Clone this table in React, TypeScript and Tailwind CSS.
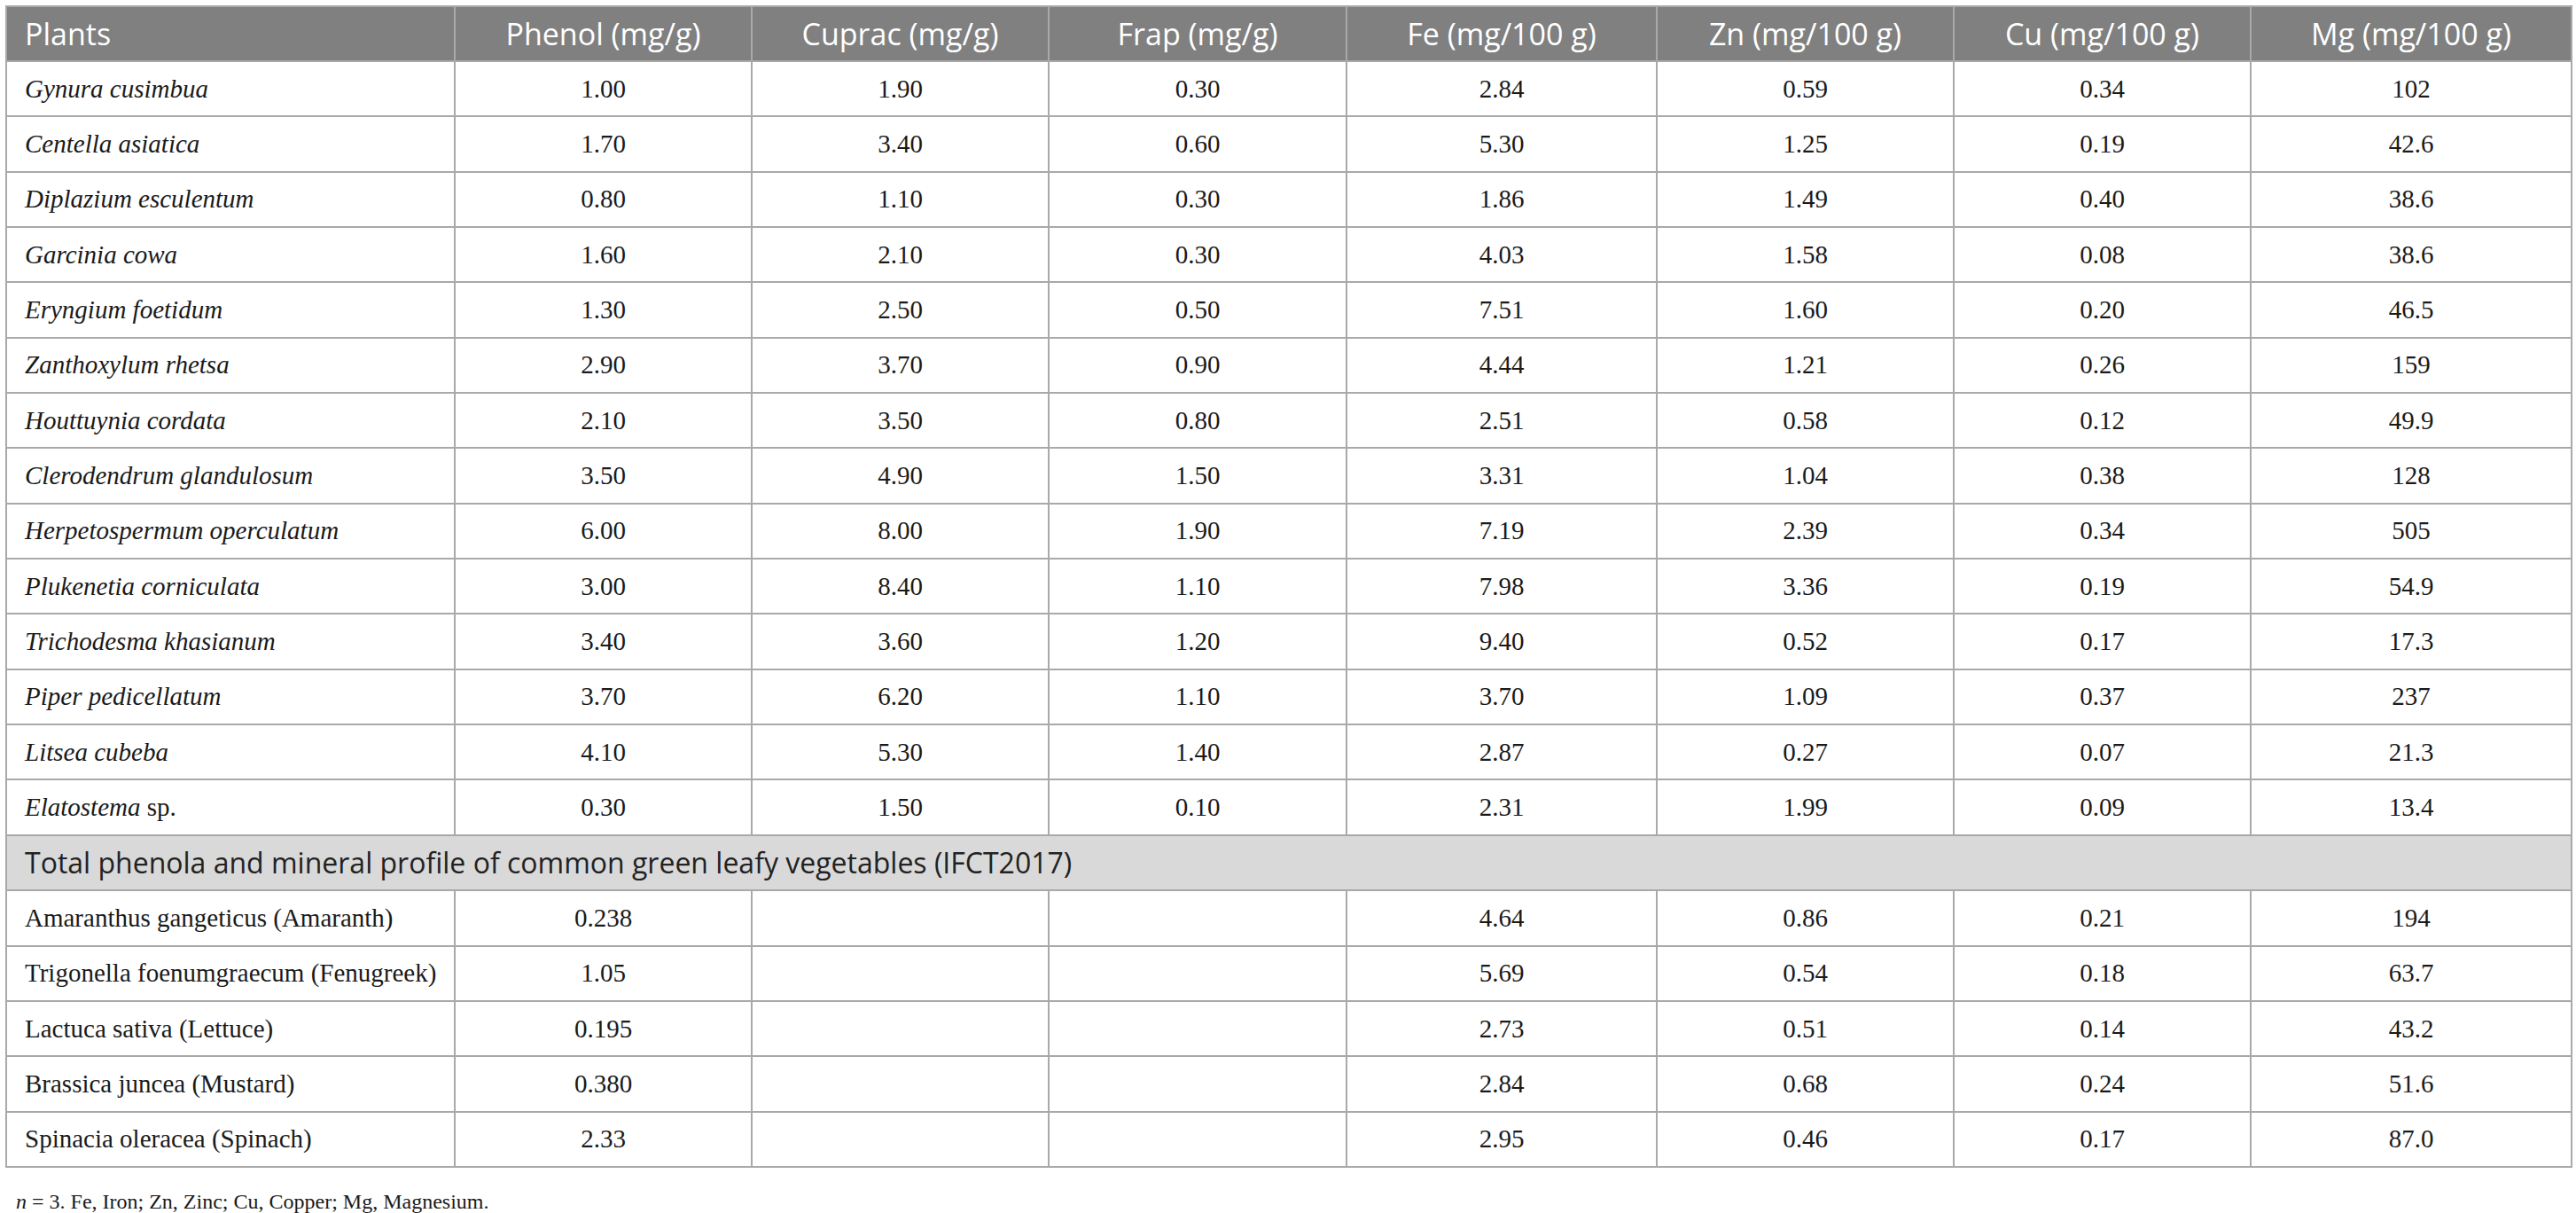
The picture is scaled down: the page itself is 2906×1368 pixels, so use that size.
const sans = "font-['Open_Sans','Noto_Sans',sans-serif]";
const serif = "font-['Liberation_Serif','Times_New_Roman',serif]";

const headers = [
  "Plants",
  "Phenol (mg/g)",
  "Cuprac (mg/g)",
  "Frap (mg/g)",
  "Fe (mg/100 g)",
  "Zn (mg/100 g)",
  "Cu (mg/100 g)",
  "Mg (mg/100 g)",
];

const wildPlants: [string, string[], string?][] = [
  ["Gynura cusimbua", ["1.00", "1.90", "0.30", "2.84", "0.59", "0.34", "102"]],
  ["Centella asiatica", ["1.70", "3.40", "0.60", "5.30", "1.25", "0.19", "42.6"]],
  ["Diplazium esculentum", ["0.80", "1.10", "0.30", "1.86", "1.49", "0.40", "38.6"]],
  ["Garcinia cowa", ["1.60", "2.10", "0.30", "4.03", "1.58", "0.08", "38.6"]],
  ["Eryngium foetidum", ["1.30", "2.50", "0.50", "7.51", "1.60", "0.20", "46.5"]],
  ["Zanthoxylum rhetsa", ["2.90", "3.70", "0.90", "4.44", "1.21", "0.26", "159"]],
  ["Houttuynia cordata", ["2.10", "3.50", "0.80", "2.51", "0.58", "0.12", "49.9"]],
  ["Clerodendrum glandulosum", ["3.50", "4.90", "1.50", "3.31", "1.04", "0.38", "128"]],
  ["Herpetospermum operculatum", ["6.00", "8.00", "1.90", "7.19", "2.39", "0.34", "505"]],
  ["Plukenetia corniculata", ["3.00", "8.40", "1.10", "7.98", "3.36", "0.19", "54.9"]],
  ["Trichodesma khasianum", ["3.40", "3.60", "1.20", "9.40", "0.52", "0.17", "17.3"]],
  ["Piper pedicellatum", ["3.70", "6.20", "1.10", "3.70", "1.09", "0.37", "237"]],
  ["Litsea cubeba", ["4.10", "5.30", "1.40", "2.87", "0.27", "0.07", "21.3"]],
  ["Elatostema", ["0.30", "1.50", "0.10", "2.31", "1.99", "0.09", "13.4"], " sp."],
];

const commonVeg: [string, string[]][] = [
  ["Amaranthus gangeticus (Amaranth)", ["0.238", "", "", "4.64", "0.86", "0.21", "194"]],
  ["Trigonella foenumgraecum (Fenugreek)", ["1.05", "", "", "5.69", "0.54", "0.18", "63.7"]],
  ["Lactuca sativa (Lettuce)", ["0.195", "", "", "2.73", "0.51", "0.14", "43.2"]],
  ["Brassica juncea (Mustard)", ["0.380", "", "", "2.84", "0.68", "0.24", "51.6"]],
  ["Spinacia oleracea (Spinach)", ["2.33", "", "", "2.95", "0.46", "0.17", "87.0"]],
];

const cell = "border-2 border-[#a9a9a9] px-[20px] py-0 whitespace-nowrap";

function ValueCells({ values }: { values: string[] }) {
  return (
    <>
      {values.map((v, i) => (
        <td key={i} className={`${cell} text-center`}>
          {v}
        </td>
      ))}
    </>
  );
}

export default function App() {
  return (
    <div className="bg-white min-h-[1368px] pt-[6px] pl-[6px] text-[#1a1a1a]">
      <table className="table-fixed border-collapse w-[2894px]">
        <colgroup>
          <col className="w-[506px]" />
          <col className="w-[335px]" />
          <col className="w-[335px]" />
          <col className="w-[336px]" />
          <col className="w-[350px]" />
          <col className="w-[335px]" />
          <col className="w-[335px]" />
          <col className="w-[362px]" />
        </colgroup>
        <thead>
          <tr className={`h-[62px] bg-[#808080] text-white ${sans} text-[34px]`}>
            {headers.map((h, i) => (
              <th
                key={h}
                className={`${cell} font-normal leading-none ${i === 0 ? "text-left" : "text-center"}`}
              >
                {h}
              </th>
            ))}
          </tr>
        </thead>
        <tbody className={`${serif} text-[29px] leading-none`}>
          {wildPlants.map(([name, values, suffix]) => (
            <tr key={name} className="h-[62.35px]">
              <td className={`${cell} text-left`}>
                <i>{name}</i>
                {suffix}
              </td>
              <ValueCells values={values} />
            </tr>
          ))}
          <tr className="h-[62.35px] bg-[#d9d9d9]">
            <td colSpan={8} className={`${cell} text-left ${sans} text-[32px] text-[#222]`}>
              Total phenola and mineral profile of common green leafy vegetables (IFCT2017)
            </td>
          </tr>
          {commonVeg.map(([name, values]) => (
            <tr key={name} className="h-[62.35px]">
              <td className={`${cell} text-left`}>{name}</td>
              <ValueCells values={values} />
            </tr>
          ))}
        </tbody>
      </table>
      <p className={`${serif} text-[24px] pl-[12px] mt-[26px] leading-none`}>
        <i>n</i> = 3. Fe, Iron; Zn, Zinc; Cu, Copper; Mg, Magnesium.
      </p>
    </div>
  );
}
